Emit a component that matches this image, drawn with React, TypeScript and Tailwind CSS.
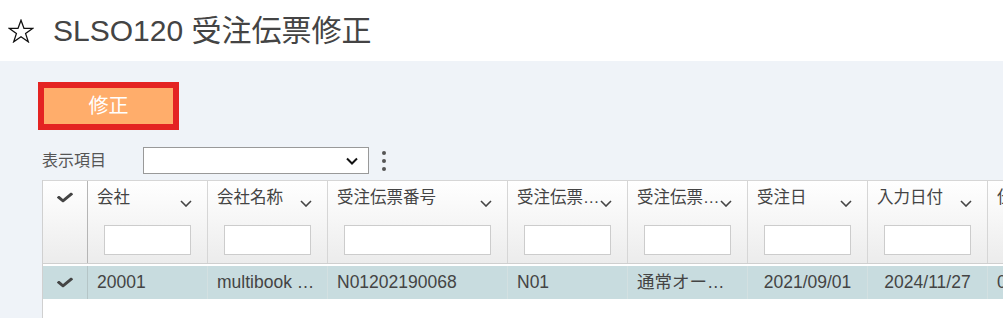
import React from "react";

// Order-slip edit screen (SLSO120)

const FONT = { fontFamily: '"Liberation Sans", "Noto Sans CJK JP", sans-serif' };

type Col = { key: string; label: string; width: string; align?: "center" };

const COLUMNS: Col[] = [
  { key: "company", label: "会社", width: "w-[120px]" },
  { key: "companyName", label: "会社名称", width: "w-[120px]" },
  { key: "slipNo", label: "受注伝票番号", width: "w-[180px]" },
  { key: "slipType", label: "受注伝票区分", width: "w-[120px]" },
  { key: "slipTypeName", label: "受注伝票区分名称", width: "w-[120px]" },
  { key: "orderDate", label: "受注日", width: "w-[120px]", align: "center" },
  { key: "inputDate", label: "入力日付", width: "w-[120px]", align: "center" },
  { key: "slip", label: "伝票日付", width: "w-[120px]" },
];

const ROW: Record<string, string> = {
  company: "20001",
  companyName: "multibook Inc.",
  slipNo: "N01202190068",
  slipType: "N01",
  slipTypeName: "通常オーダー",
  orderDate: "2021/09/01",
  inputDate: "2024/11/27",
  slip: "0",
};

function CheckIcon() {
  return (
    <svg viewBox="0 0 512 512" className="w-[16px] h-[13px]" preserveAspectRatio="none">
      <path
        fill="#444"
        d="M173.898 439.404l-166.4-166.4c-9.997-9.997-9.997-26.206 0-36.204l36.203-36.204c9.997-9.998 26.207-9.998 36.204 0L192 312.69 432.095 72.596c9.997-9.997 26.207-9.997 36.204 0l36.203 36.204c9.997 9.997 9.997 26.206 0 36.204l-294.4 294.401c-9.998 9.997-26.207 9.997-36.204-.001z"
      />
    </svg>
  );
}

function Chevron() {
  return (
    <svg width="12" height="7" viewBox="0 0 12 7" className="shrink-0">
      <path d="M1 1 L6 6 L11 1" fill="none" stroke="#444" strokeWidth="1.6" />
    </svg>
  );
}

export default function App() {
  return (
    <div className="w-[1003px] h-[318px] overflow-hidden bg-white" style={FONT}>
      {/* Title bar */}
      <header className="h-[61px] bg-white flex items-center pl-[8px]">
        <svg width="26" height="24" viewBox="0 0 26 24" className="mt-[1px]">
          <path
            d="M13 1.2 L16 9.4 L24.6 9.4 L17.6 14.6 L20.3 22.8 L13 17.8 L5.7 22.8 L8.4 14.6 L1.4 9.4 L10 9.4 Z"
            fill="none"
            stroke="#111"
            strokeWidth="1.3"
            strokeLinejoin="miter"
          />
        </svg>
        <h1 className="ml-[19px] text-[30px] leading-none text-[#444]">SLSO120 受注伝票修正</h1>
      </header>

      <main className="bg-[#eff3f8] h-[257px] pl-[38px] pt-[21px]">
        {/* Action button */}
        <div className="w-[141px] h-[48px] border-[6px] border-[#e42322]">
          <button className="w-full h-full bg-[#ffad6b] text-white text-[20px] leading-none flex items-center justify-center">
            修正
          </button>
        </div>

        {/* Display items toolbar */}
        <div className="mt-[17px] ml-[4px] h-[27px] flex items-center">
          <span className="text-[16px] text-[#555] w-[101px]">表示項目</span>
          <div className="w-[226px] h-[27px] bg-white border border-[#999] flex items-center justify-end pr-[10px]">
            <svg width="12" height="8" viewBox="0 0 12 8">
              <path d="M1 1.5 L6 6.5 L11 1.5" fill="none" stroke="#111" strokeWidth="2" />
            </svg>
          </div>
          <div className="ml-[13px] flex flex-col gap-[4px]">
            <span className="w-[4px] h-[4px] rounded-full bg-[#555]" />
            <span className="w-[4px] h-[4px] rounded-full bg-[#555]" />
            <span className="w-[4px] h-[4px] rounded-full bg-[#555]" />
          </div>
        </div>

        {/* Grid */}
        <div className="mt-[6px] ml-[4px] bg-white border-l border-[#d0d0d0] h-[200px]">
          <div className="flex border-t border-[#d6d6d6] border-b border-b-[#cfcfcf] bg-gradient-to-b from-white to-[#ececec]">
            <div className="w-[45px] h-[82px] shrink-0 border-r border-[#b5b5b5] flex justify-center pt-[10px]">
              <CheckIcon />
            </div>
            {COLUMNS.map((c) => (
              <div key={c.key} className={`${c.width} h-[82px] shrink-0 border-r border-[#d6d6d6]`}>
                <div className="flex items-start pl-[9px] pr-[15px] pt-[4px] h-[44px]">
                  <span className="truncate text-[16.5px] leading-[24px] text-[#444] min-w-0 flex-1">{c.label}</span>
                  <span className="mt-[15px]">
                    <Chevron />
                  </span>
                </div>
                <div className="mx-[16px] h-[30px] bg-white border border-[#cccccc]" />
              </div>
            ))}
          </div>

          <div className="flex mt-[2px] h-[33px] bg-[#c8dcdf]">
            <div className="w-[45px] shrink-0 border-r border-[#b5c5c7] flex items-center justify-center">
              <CheckIcon />
            </div>
            {COLUMNS.map((c) => (
              <div
                key={c.key}
                className={`${c.width} shrink-0 border-r border-[#d3e0e1] flex items-center px-[9px] ${
                  c.align === "center" ? "justify-center" : ""
                }`}
              >
                <span className="truncate text-[17.5px] text-[#444]">{ROW[c.key]}</span>
              </div>
            ))}
          </div>
        </div>
      </main>
    </div>
  );
}
